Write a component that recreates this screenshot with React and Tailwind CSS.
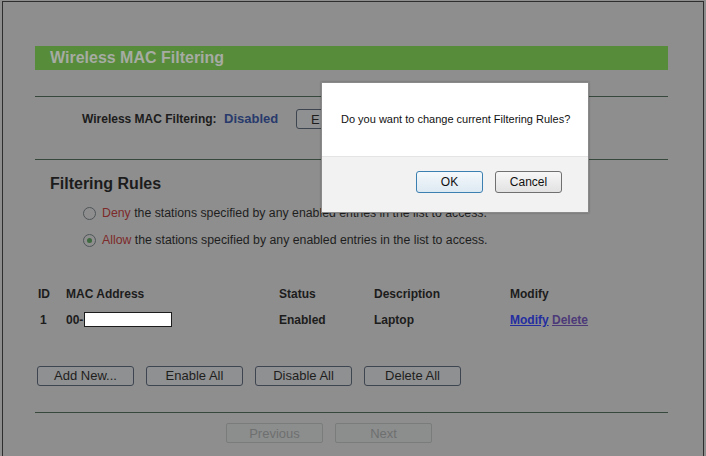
const HEAD = "font-bold text-[12px] text-[#1c1c1c]";

const PageButton = ({ children, className = "" }) => (
  <button
    className={`h-[20px] w-[97px] rounded-[3px] border border-[#3d4650] bg-[#8f9091] text-[13px] leading-none text-[#1e1e1e] ${className}`}
  >
    {children}
  </button>
);

const Radio = ({ checked }) => (
  <span className="flex h-[13px] w-[13px] items-center justify-center rounded-full border border-[#4f5558] bg-[#8e8e8e]">
    {checked && <span className="h-[5px] w-[5px] rounded-full bg-[#3f6a3f]" />}
  </span>
);

const Rule = () => <div className="h-[1px] w-[633px] bg-[#36483c]" />;

export default function App() {
  return (
    <div className="relative h-[456px] w-[706px] overflow-hidden bg-[#8e8e8e] font-['Liberation_Sans',Arial,sans-serif]">
      <div className="ml-[2px] mt-[1px] h-[455px] w-[702px] border-l border-r border-t border-[#2e2e2e] pl-[32px]">
        <div className="mt-[44px] flex h-[24px] w-[633px] items-center bg-[#578c3b] pl-[15px] text-[16px] font-bold text-[#a6aba3]">
          Wireless MAC Filtering
        </div>

        <div className="mt-[26px]"><Rule /></div>

        <div className="mt-[12px] flex h-[20px] items-center">
          <span className="ml-[47px] w-[142px] text-[12px] font-bold text-[#1c1c1c]">Wireless MAC Filtering:</span>
          <span className="w-[72px] text-[13px] font-bold text-[#283a6c]">Disabled</span>
          <PageButton className="text-left pl-[14px]">E</PageButton>
        </div>

        <div className="mt-[30px]"><Rule /></div>

        <div className="mt-[12px] pl-[15px] text-[16px] font-bold text-[#1c1c1c]">Filtering Rules</div>

        <div className="mt-[8px] flex items-center gap-[6px] pl-[48px] text-[12.3px] text-[#1e1e1e]">
          <Radio />
          <span><span className="text-[#7d2a2a]">Deny</span> the stations specified by any enabled entries in the list to access.</span>
        </div>
        <div className="mt-[9px] flex items-center gap-[6px] pl-[48px] text-[12.3px] text-[#1e1e1e]">
          <Radio checked />
          <span><span className="text-[#7d2a2a]">Allow</span> the stations specified by any enabled entries in the list to access.</span>
        </div>

        <div className="mt-[37px] flex h-[14px] items-center">
          <span className={`ml-[3px] w-[28px] ${HEAD}`}>ID</span>
          <span className={`w-[213px] ${HEAD}`}>MAC Address</span>
          <span className={`w-[95px] ${HEAD}`}>Status</span>
          <span className={`w-[136px] ${HEAD}`}>Description</span>
          <span className={HEAD}>Modify</span>
        </div>
        <div className="mt-[11px] flex h-[16px] items-center">
          <span className={`ml-[5px] w-[26px] ${HEAD}`}>1</span>
          <span className={`flex w-[213px] items-center ${HEAD}`}>
            00-
            <span className="ml-[1px] inline-block h-[15px] w-[88px] border border-[#1c1c1c] bg-white" />
          </span>
          <span className={`w-[95px] ${HEAD}`}>Enabled</span>
          <span className={`w-[136px] ${HEAD}`}>Laptop</span>
          <span className="text-[12px] font-bold">
            <span className="text-[#232da0] underline">Modify</span>{" "}
            <span className="text-[#4c3a78] underline">Delete</span>
          </span>
        </div>

        <div className="mt-[38px] flex gap-[12px] pl-[2px]">
          <PageButton>Add New...</PageButton>
          <PageButton>Enable All</PageButton>
          <PageButton>Disable All</PageButton>
          <PageButton>Delete All</PageButton>
        </div>

        <div className="mt-[26px]"><Rule /></div>

        <div className="mt-[10px] flex gap-[12px] pl-[191px]">
          <button className="h-[20px] w-[97px] rounded-[2px] border border-[#7a7c7c] bg-[#8c8d8d] text-[13px] text-[#6e7070]">Previous</button>
          <button className="h-[20px] w-[97px] rounded-[2px] border border-[#7a7c7c] bg-[#8c8d8d] text-[13px] text-[#6e7070]">Next</button>
        </div>
      </div>

      <div className="absolute left-[321px] top-[82px] w-[268px] border border-[#8a8a8a] bg-white shadow-[0_0_2px_rgba(0,0,0,0.3)]">
        <div className="flex h-[73px] items-center pl-[19px] text-[11px] text-[#111]">
          Do you want to change current Filtering Rules?
        </div>
        <div className="flex h-[56px] items-start justify-end gap-[12px] border-t border-[#e4e4e4] bg-[#f2f2f2] pr-[26px] pt-[14px]">
          <button className="h-[22px] w-[67px] rounded-[3px] border border-[#3c7fb1] bg-gradient-to-b from-[#f4f9fc] to-[#dde9f2] text-[12px] text-[#111]">OK</button>
          <button className="h-[22px] w-[67px] rounded-[3px] border border-[#707070] bg-gradient-to-b from-[#f7f7f7] to-[#e2e2e2] text-[12px] text-[#111]">Cancel</button>
        </div>
      </div>
    </div>
  );
}
